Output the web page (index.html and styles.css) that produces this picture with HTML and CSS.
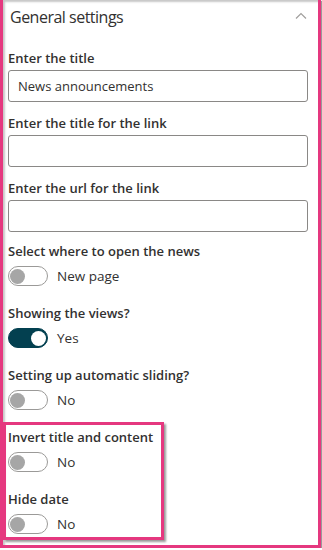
FILE: index.html
```html
<!DOCTYPE html>
<html lang="en">
<head>
    <meta charset="UTF-8">
    <meta name="viewport" content="width=device-width, initial-scale=1.0">
    <title>General settings</title>
    <link rel="stylesheet" href="styles.css">
</head>
<body>
    <div class="frame">
        <div class="panel">
            <!-- Group header -->
            <div class="group-header">
                <span class="group-title">General settings</span>
                <svg class="chevron" width="12" height="8" viewBox="0 0 12 8">
                    <path d="M1 6.5 L6 1.5 L11 6.5" fill="none" stroke="#a19f9d" stroke-width="1.2"/>
                </svg>
            </div>

            <!-- Text fields -->
            <div class="field">
                <label class="field-label">Enter the title</label>
                <input class="text-input" type="text" value="News announcements">
            </div>
            <div class="field">
                <label class="field-label">Enter the title for the link</label>
                <input class="text-input" type="text">
            </div>
            <div class="field">
                <label class="field-label">Enter the url for the link</label>
                <input class="text-input" type="text">
            </div>

            <!-- Toggles -->
            <div class="toggle-field first">
                <label class="field-label">Select where to open the news</label>
                <div class="toggle-row">
                    <span class="toggle"><span class="thumb"></span></span>
                    <span class="toggle-text">New page</span>
                </div>
            </div>
            <div class="toggle-field">
                <label class="field-label">Showing the views?</label>
                <div class="toggle-row">
                    <span class="toggle on"><span class="thumb"></span></span>
                    <span class="toggle-text">Yes</span>
                </div>
            </div>
            <div class="toggle-field">
                <label class="field-label">Setting up automatic sliding?</label>
                <div class="toggle-row">
                    <span class="toggle"><span class="thumb"></span></span>
                    <span class="toggle-text">No</span>
                </div>
            </div>

            <!-- Highlighted new options -->
            <div class="highlight">
                <div class="toggle-field">
                    <label class="field-label">Invert title and content</label>
                    <div class="toggle-row">
                        <span class="toggle"><span class="thumb"></span></span>
                        <span class="toggle-text">No</span>
                    </div>
                </div>
                <div class="toggle-field">
                    <label class="field-label">Hide date</label>
                    <div class="toggle-row">
                        <span class="toggle"><span class="thumb"></span></span>
                        <span class="toggle-text">No</span>
                    </div>
                </div>
            </div>
        </div>
    </div>
</body>
</html>
```

FILE: styles.css
```css
body {
    margin: 0;
    padding: 0;
    background-color: #ffffff;
    font-family: "Segoe UI", "Open Sans", sans-serif;
    color: #323130;
}
.frame {
    width: 321px;
    height: 548px;
    box-sizing: border-box;
    border: 3px solid #e5387f;
    border-top: none;
    box-shadow: 1px 1px 1px #9a9a9a;
}
.panel {
    height: 100%;
    box-sizing: border-box;
    padding: 0 10px 0 5px;
    box-shadow: inset 2px 2px 2px #c8c8c8;
}
.group-header {
    display: flex;
    align-items: center;
    justify-content: space-between;
    height: 37px;
    box-sizing: border-box;
    padding: 0 0 3px 2px;
}
.group-title {
    font-size: 16px;
    letter-spacing: -0.5px;
    font-weight: 400;
}
.chevron {
    margin: 0 1px 2px 0;
}
.field {
    margin-top: 6px;
}
.field-label {
    display: block;
    font-size: 13px;
    font-weight: 600;
    line-height: 20px;
    padding: 5px 0 2px;
}
.text-input {
    display: block;
    width: 100%;
    height: 32px;
    box-sizing: border-box;
    border: 1px solid #8a8886;
    border-radius: 3px;
    padding: 0 9px;
    font-family: inherit;
    font-size: 13px;
    color: #323130;
}
.toggle-field {
    margin-top: 5px;
    margin-bottom: 12px;
}
.toggle-field.first {
    margin-top: 4px;
}
.toggle-field .field-label {
    padding-bottom: 5px;
}
.toggle-row {
    display: flex;
    align-items: center;
    height: 20px;
}
.toggle {
    display: flex;
    align-items: center;
    width: 40px;
    height: 20px;
    box-sizing: border-box;
    border: 1px solid #9b9a98;
    border-radius: 10px;
    padding: 0 1px;
}
.thumb {
    width: 15px;
    height: 15px;
    border-radius: 50%;
    background-color: #a6a6a6;
}
.toggle.on {
    background-color: #034050;
    border-color: #034050;
    justify-content: flex-end;
}
.toggle.on .thumb {
    background-color: #ffffff;
}
.toggle-text {
    margin-left: 9px;
    font-size: 13.5px;
}
.highlight {
    margin: 3px 0 0 -5px;
    width: 153px;
    border: 3px solid #e5387f;
    padding: 0 0 3px 2px;
    box-shadow: 2px 2px 2px #9a9a9a;
}
.highlight .toggle-field {
    margin: 0;
}
.highlight .toggle-field:first-child .field-label {
    padding-top: 2px;
}
.highlight .toggle-field + .toggle-field {
    margin-top: 12px;
}
```
